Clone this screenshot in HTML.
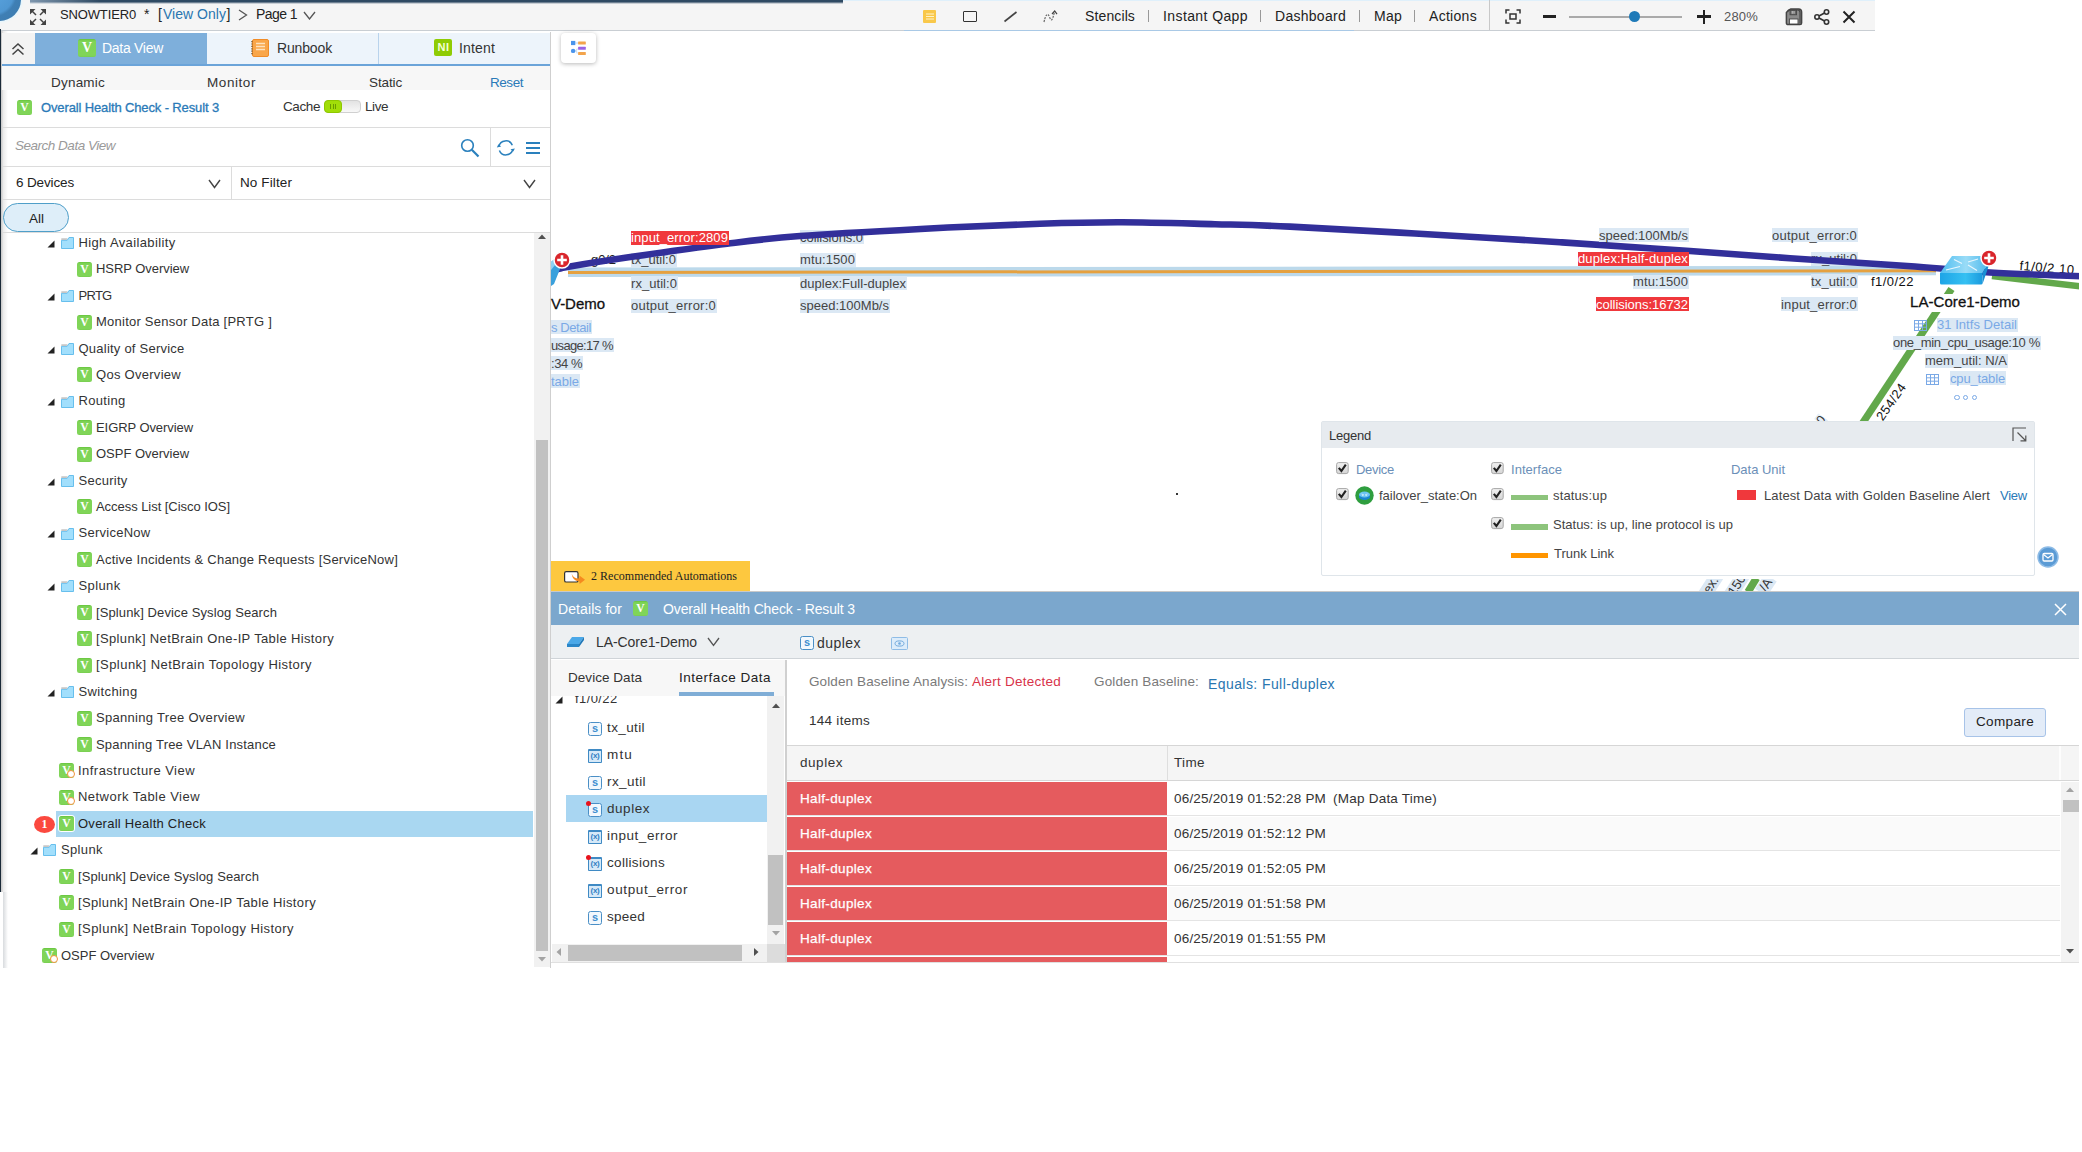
<!DOCTYPE html>
<html><head><meta charset="utf-8"><title>Map</title><style>
*{box-sizing:border-box;margin:0;padding:0}
html,body{width:2082px;height:1152px;overflow:hidden;background:#fff}
body{font-family:"Liberation Sans",sans-serif;position:relative;color:#333}
.t{position:absolute;white-space:nowrap;display:block}
.b{position:absolute;display:block}
.v{position:absolute;border-radius:2.5px;background:linear-gradient(#66c43c,#7fd457 12%,#80d558 90%,#78cd50);color:#fff;font-family:"Liberation Serif",serif;font-weight:bold;text-align:center}
</style></head><body>
<div class="b" style="left:0px;top:0px;width:1875px;height:31px;background:#f5f5f5;border-bottom:1.4px solid #c9ced3"></div>
<div class="b" style="left:30px;top:0px;width:813px;height:4.4px;background:linear-gradient(90deg,#7e96ad,#2f4a63 70px,#2f4a63);-webkit-mask-image:linear-gradient(#000,#000 45%,transparent);mask-image:linear-gradient(#000,#000 45%,transparent)"></div>
<div class="b" style="left:843px;top:0px;width:1032px;height:1px;background:#dff0fb;"></div>
<div class="b" style="left:-22px;top:-22px;width:43px;height:43px;background:radial-gradient(circle at 35% 35%,#5aa4de 0,#4f97d2 52%,#3f7fb4 60%,#3c7aae 100%);border-radius:50%;box-shadow:0 0 2px 1px #dff6ff"></div>
<svg class="b" style="left:30px;top:9px" width="16" height="16" viewBox="0 0 16 16" fill="#444" stroke="#444" stroke-width="1.5"><path d="M0 0H5.5L0 5.5Z M16 0V5.5L10.500 0Z M0 16V10.5L5.5 16Z M16 16H10.5L16 10.5Z" stroke="none"/><path d="M2 2L6 6M14 2L10 6M2 14L6 10M14 14L10 10"/></svg>
<span class="t" style="left:60.0px;top:7.9px;font-size:13px;line-height:13px;color:#222;letter-spacing:-0.142px;">SNOWTIER0</span>
<span class="t" style="left:144.0px;top:7.0px;font-size:14px;line-height:14px;color:#222;">*</span>
<span class="t" style="left:158.0px;top:7.0px;font-size:14px;line-height:14px;color:#222;">[</span>
<span class="t" style="left:163.0px;top:7.0px;font-size:14px;line-height:14px;color:#2a76b0;letter-spacing:0.026px;">View Only</span>
<span class="t" style="left:226.5px;top:7.0px;font-size:14px;line-height:14px;color:#222;">]</span>
<svg class="b" style="left:238px;top:9px" width="10" height="12" viewBox="0 0 10 12" fill="none" stroke="#555" stroke-width="1.3"><path d="M1 1L8.5 6L1 11"/></svg>
<span class="t" style="left:256.0px;top:7.0px;font-size:14px;line-height:14px;color:#222;letter-spacing:-0.562px;">Page 1</span>
<svg class="b" style="left:303px;top:11px" width="13" height="9" viewBox="0 0 13 9" fill="none" stroke="#555" stroke-width="1.3"><path d="M1 1L6.5 8L12 1"/></svg>
<div class="b" style="left:923px;top:10px;width:13px;height:13px;background:#f9c84a;border-radius:1px"></div>
<svg class="b" style="left:926px;top:13px" width="8" height="7" viewBox="0 0 8 7" stroke="#fff3c9" stroke-width="1"><path d="M0 1H8M0 3.5H8M0 6H8"/></svg>
<div class="b" style="left:963px;top:11px;width:14px;height:11px;background:transparent;border:1.5px solid #333;border-radius:1px"></div>
<svg class="b" style="left:1003px;top:10px" width="16" height="13" viewBox="0 0 16 13" stroke="#444" stroke-width="1.6"><path d="M1.5 11.5L13.5 2"/></svg>
<svg class="b" style="left:1043px;top:9px" width="16" height="15" viewBox="0 0 16 15" fill="none" stroke="#666" stroke-width="1.2"><path d="M1 13 C3 4,5 4,6.5 8 S9 13,11.5 3" stroke-dasharray="2 1"/><path d="M9 5L11.7 2L14 5.2" stroke="#444"/></svg>
<span class="t" style="left:1085.0px;top:8.6px;font-size:14px;line-height:14px;color:#222;letter-spacing:0.122px;">Stencils</span>
<div class="b" style="left:1148px;top:10px;width:1px;height:12px;background:#999;"></div>
<span class="t" style="left:1163.0px;top:8.6px;font-size:14px;line-height:14px;color:#222;letter-spacing:0.403px;">Instant Qapp</span>
<div class="b" style="left:1260px;top:10px;width:1px;height:12px;background:#999;"></div>
<span class="t" style="left:1275.0px;top:8.6px;font-size:14px;line-height:14px;color:#222;letter-spacing:0.279px;">Dashboard</span>
<div class="b" style="left:1359px;top:10px;width:1px;height:12px;background:#999;"></div>
<span class="t" style="left:1374.0px;top:8.6px;font-size:14px;line-height:14px;color:#222;letter-spacing:0.255px;">Map</span>
<div class="b" style="left:1414px;top:10px;width:1px;height:12px;background:#999;"></div>
<span class="t" style="left:1429.0px;top:8.6px;font-size:14px;line-height:14px;color:#222;letter-spacing:0.299px;">Actions</span>
<div class="b" style="left:1489px;top:0px;width:1px;height:30px;background:#c8c8c8;"></div>
<div class="b" style="left:904px;top:30px;width:450px;height:1px;background:#a9c9e6;"></div>
<svg class="b" style="left:1505px;top:9px" width="16" height="15" viewBox="0 0 16 15" fill="none" stroke="#333" stroke-width="1.5"><path d="M1 4.5V1H4.5M11.5 1H15V4.5M15 10.5V14H11.5M4.5 14H1V10.5"/><rect x="5" y="5" width="6" height="5"/></svg>
<div class="b" style="left:1543px;top:15px;width:13px;height:2.5px;background:#222;"></div>
<div class="b" style="left:1569px;top:16px;width:113px;height:1.5px;background:#aaa;"></div>
<div class="b" style="left:1629px;top:11px;width:11px;height:11px;background:#1f7ab8;border-radius:50%"></div>
<div class="b" style="left:1697px;top:15px;width:14px;height:2.5px;background:#222;"></div>
<div class="b" style="left:1702.7px;top:10px;width:2.5px;height:14px;background:#222;"></div>
<span class="t" style="left:1724.0px;top:9.5px;font-size:13px;line-height:13px;color:#555;letter-spacing:0.188px;">280%</span>
<svg class="b" style="left:1785px;top:8px" width="18" height="18" viewBox="0 0 18 18"><path d="M3.6 2.2 L5.8 0.9 H13.6 Q16.6 0.9 16.6 4 V15 Q16.6 16.6 15 16.6 H3.2 Q1.4 16.6 1.4 15 V4.6Z" fill="#8a8a8a" stroke="#444" stroke-width="1.5"/><path d="M2.6 3.4 L4.6 2 H12.6 Q15 2 15 4.4 V15.4" fill="none" stroke="#444" stroke-width="1.1"/><rect x="5" y="2.2" width="6.6" height="4.6" fill="#666" stroke="#444" stroke-width=".8"/><path d="M7.2 3V5.8M9 3V5.8" stroke="#ddd" stroke-width=".9"/><rect x="4.4" y="11" width="8.6" height="5" fill="#fff" stroke="#444" stroke-width=".9"/></svg>
<svg class="b" style="left:1814px;top:9px" width="16" height="16" viewBox="0 0 16 16" fill="none" stroke="#333" stroke-width="1.6"><circle cx="12.5" cy="3" r="2.2"/><circle cx="3" cy="8" r="2.2"/><circle cx="12.5" cy="13" r="2.2"/><path d="M5 7L10.5 4M5 9L10.5 12"/></svg>
<svg class="b" style="left:1842px;top:10px" width="14" height="14" viewBox="0 0 14 14" stroke="#222" stroke-width="2"><path d="M1.5 1.5L12.5 12.5M12.5 1.5L1.5 12.5"/></svg>
<div class="b" style="left:0px;top:29px;width:1.3px;height:863px;background:#1b2a38;"></div>
<div class="b" style="left:1.3px;top:31px;width:6.5px;height:861px;background:linear-gradient(90deg,rgba(150,150,150,.55),rgba(200,200,200,.35) 35%,rgba(255,255,255,0));"></div>
<div class="b" style="left:3px;top:892px;width:5px;height:76px;background:linear-gradient(90deg,rgba(190,195,200,.6),rgba(255,255,255,0));"></div>
<div class="b" style="left:550px;top:32px;width:1px;height:936px;background:#cfcfcf;"></div>
<div class="b" style="left:2px;top:33px;width:33px;height:31px;background:#f3f3f3;"></div>
<div class="b" style="left:35px;top:33px;width:172px;height:31px;background:#7eafdb;"></div>
<div class="b" style="left:207px;top:33px;width:343px;height:31px;background:#edf4fb;"></div>
<div class="b" style="left:378px;top:33px;width:1px;height:31px;background:#b9d3ec;"></div>
<div class="b" style="left:2px;top:64px;width:548px;height:2px;background:#6ba4d9;"></div>
<svg class="b" style="left:11px;top:42px" width="14" height="14" viewBox="0 0 14 14" fill="none" stroke="#444" stroke-width="1.5"><path d="M1.5 7L7 2L12.5 7M1.5 12.5L7 7.5L12.5 12.5"/></svg>
<div class="v" style="left:78px;top:39px;width:18px;height:18px;font-size:13.9px;line-height:18.5px;">V</div>
<span class="t" style="left:102.0px;top:41.1px;font-size:14px;line-height:14px;color:#fff;letter-spacing:-0.284px;">Data View</span>
<svg class="b" style="left:251px;top:39px" width="18" height="18" viewBox="0 0 18 18"><rect x="1.5" y="0.5" width="16" height="17" rx="1.5" fill="#f9a64a" stroke="#f08c28" stroke-width="1"/><path d="M5 4.5H14M5 7.5H14M5 10.5H14" stroke="#fde2bf" stroke-width="1.3"/><path d="M1 2V16" stroke="#7a5a33" stroke-width="1.4" stroke-dasharray="1.2 1.2"/></svg>
<span class="t" style="left:277.0px;top:41.1px;font-size:14px;line-height:14px;color:#333;letter-spacing:-0.149px;">Runbook</span>
<div class="b" style="left:434px;top:39px;width:18px;height:17px;background:#8fcc04;border-radius:2px"></div>
<span class="t" style="left:437.5px;top:42.2px;font-size:11px;line-height:11px;color:#f4ffd8;letter-spacing:0.500px;font-weight:bold;">NI</span>
<span class="t" style="left:459.0px;top:41.1px;font-size:14px;line-height:14px;color:#333;letter-spacing:0.163px;">Intent</span>
<div class="b" style="left:2px;top:66px;width:548px;height:24px;background:#f7f7f7;"></div>
<span class="t" style="left:51.0px;top:75.9px;font-size:13.5px;line-height:13.5px;color:#333;letter-spacing:0.213px;">Dynamic</span>
<span class="t" style="left:207.0px;top:75.9px;font-size:13.5px;line-height:13.5px;color:#333;letter-spacing:0.569px;">Monitor</span>
<span class="t" style="left:369.0px;top:75.9px;font-size:13.5px;line-height:13.5px;color:#333;letter-spacing:-0.127px;">Static</span>
<span class="t" style="left:490.0px;top:75.9px;font-size:13.5px;line-height:13.5px;color:#2a7ab8;letter-spacing:-0.453px;">Reset</span>
<div class="v" style="left:17px;top:100px;width:15px;height:15px;font-size:11.6px;line-height:15.5px;">V</div>
<span class="t" style="left:41.0px;top:101.0px;font-size:13px;line-height:13px;color:#2a7ab8;letter-spacing:-0.131px;-webkit-text-stroke:0.3px #2a7ab8;">Overall Health Check - Result 3</span>
<span class="t" style="left:283.0px;top:99.6px;font-size:13.5px;line-height:13.5px;color:#333;letter-spacing:-0.405px;">Cache</span>
<div class="b" style="left:324px;top:100px;width:37px;height:13px;background:linear-gradient(#e3e3e3,#f8f8f8);border-radius:4px;border:1px solid #d0d0d0"></div>
<div class="b" style="left:324px;top:100px;width:18px;height:13px;background:#a1dd08;border-radius:4px;border:1px solid #8ec800"></div>
<div class="b" style="left:330px;top:104px;width:1px;height:5px;background:#6a9c00;"></div>
<div class="b" style="left:332.5px;top:104px;width:1px;height:5px;background:#6a9c00;"></div>
<div class="b" style="left:335px;top:104px;width:1px;height:5px;background:#6a9c00;"></div>
<span class="t" style="left:365.0px;top:99.6px;font-size:13.5px;line-height:13.5px;color:#333;letter-spacing:-0.441px;">Live</span>
<div class="b" style="left:2px;top:127px;width:548px;height:1px;background:#dcdcdc;"></div>
<span class="t" style="left:15.0px;top:138.6px;font-size:13.5px;line-height:13.5px;color:#9a9a9a;letter-spacing:-0.488px;font-style:italic;">Search Data View</span>
<svg class="b" style="left:459px;top:137px" width="22" height="22" viewBox="0 0 22 22" fill="none" stroke="#2a80bd" stroke-width="1.6"><circle cx="8.5" cy="8.5" r="5.8"/><path d="M12.8 12.8L19.5 19.5" stroke-width="2.2"/></svg>
<div class="b" style="left:490px;top:128px;width:1px;height:38px;background:#dcdcdc;"></div>
<svg class="b" style="left:496px;top:138px" width="20" height="20" viewBox="0 0 20 20" fill="none" stroke="#2a80bd" stroke-width="1.5"><path d="M2.9 8.6A7 7 0 0 1 16.3 7.3"/><path d="M16.8 11.2A7 7 0 0 1 3.4 12.4"/><path d="M0.8 9.4L2.4 6.2L5.2 8.6Z" fill="#2a80bd" stroke="none"/><path d="M18.9 10.4L17.3 13.6L14.5 11.2Z" fill="#2a80bd" stroke="none"/></svg>
<div class="b" style="left:526.3px;top:142px;width:14px;height:1.7px;background:#2a80bd;"></div>
<div class="b" style="left:526.3px;top:147px;width:14px;height:1.7px;background:#2a80bd;"></div>
<div class="b" style="left:526.3px;top:152.2px;width:14px;height:1.7px;background:#2a80bd;"></div>
<div class="b" style="left:2px;top:166px;width:548px;height:1px;background:#dcdcdc;"></div>
<span class="t" style="left:16.0px;top:175.6px;font-size:13.5px;line-height:13.5px;color:#222;letter-spacing:-0.141px;">6 Devices</span>
<svg class="b" style="left:208px;top:179px" width="13" height="10" viewBox="0 0 13 10" fill="none" stroke="#444" stroke-width="1.4"><path d="M1 1L6.5 8.5L12 1"/></svg>
<div class="b" style="left:231px;top:167px;width:1px;height:32px;background:#dcdcdc;"></div>
<span class="t" style="left:240.0px;top:175.6px;font-size:13.5px;line-height:13.5px;color:#222;letter-spacing:0.110px;">No Filter</span>
<svg class="b" style="left:523px;top:179px" width="13" height="10" viewBox="0 0 13 10" fill="none" stroke="#444" stroke-width="1.4"><path d="M1 1L6.5 8.5L12 1"/></svg>
<div class="b" style="left:2px;top:199px;width:548px;height:1px;background:#dcdcdc;"></div>
<div class="b" style="left:3px;top:203px;width:66px;height:29px;background:#deeef9;border:1px solid #4f9fc9;border-radius:15px"></div>
<span class="t" style="left:29.0px;top:211.6px;font-size:13.5px;line-height:13.5px;color:#222;letter-spacing:-0.002px;">All</span>
<div class="b" style="left:2px;top:232px;width:548px;height:1px;background:#dcdcdc;"></div>
<svg class="b" style="left:47.3px;top:239.9px" width="8" height="8" viewBox="0 0 8 8"><path d="M7.5 0.5 L7.5 7.5 L0.5 7.5 Z" fill="#222"/></svg>
<svg class="b" style="left:60.6px;top:237.1px" width="13" height="12" viewBox="0 0 13 12"><path d="M0.5 3.3 H6.2 L8 0.5 H12.5 V11.5 H0.5 Z" fill="#a2dffc" stroke="#67bfed" stroke-width="1"/><path d="M0.3 1.3 H6.6 L5.6 3 H0.3Z" fill="#c6c6c6"/></svg>
<span class="t" style="left:78.5px;top:236.0px;font-size:13px;line-height:13px;color:#333;letter-spacing:0.364px;">High Availability</span>
<div class="v" style="left:77px;top:262px;width:15px;height:15px;font-size:11.6px;line-height:15.5px;">V</div>
<span class="t" style="left:96.0px;top:262.4px;font-size:13px;line-height:13px;color:#333;letter-spacing:-0.052px;">HSRP Overview</span>
<svg class="b" style="left:47.3px;top:292.7px" width="8" height="8" viewBox="0 0 8 8"><path d="M7.5 0.5 L7.5 7.5 L0.5 7.5 Z" fill="#222"/></svg>
<svg class="b" style="left:60.6px;top:289.9px" width="13" height="12" viewBox="0 0 13 12"><path d="M0.5 3.3 H6.2 L8 0.5 H12.5 V11.5 H0.5 Z" fill="#a2dffc" stroke="#67bfed" stroke-width="1"/><path d="M0.3 1.3 H6.6 L5.6 3 H0.3Z" fill="#c6c6c6"/></svg>
<span class="t" style="left:78.5px;top:288.8px;font-size:13px;line-height:13px;color:#333;letter-spacing:-0.719px;">PRTG</span>
<div class="v" style="left:77px;top:315px;width:15px;height:15px;font-size:11.6px;line-height:15.5px;">V</div>
<span class="t" style="left:96.0px;top:315.2px;font-size:13px;line-height:13px;color:#333;letter-spacing:0.239px;">Monitor Sensor Data [PRTG ]</span>
<svg class="b" style="left:47.3px;top:345.5px" width="8" height="8" viewBox="0 0 8 8"><path d="M7.5 0.5 L7.5 7.5 L0.5 7.5 Z" fill="#222"/></svg>
<svg class="b" style="left:60.6px;top:342.7px" width="13" height="12" viewBox="0 0 13 12"><path d="M0.5 3.3 H6.2 L8 0.5 H12.5 V11.5 H0.5 Z" fill="#a2dffc" stroke="#67bfed" stroke-width="1"/><path d="M0.3 1.3 H6.6 L5.6 3 H0.3Z" fill="#c6c6c6"/></svg>
<span class="t" style="left:78.5px;top:341.6px;font-size:13px;line-height:13px;color:#333;letter-spacing:0.229px;">Quality of Service</span>
<div class="v" style="left:77px;top:367px;width:15px;height:15px;font-size:11.6px;line-height:15.5px;">V</div>
<span class="t" style="left:96.0px;top:368.0px;font-size:13px;line-height:13px;color:#333;letter-spacing:0.281px;">Qos Overview</span>
<svg class="b" style="left:47.3px;top:398.29999999999995px" width="8" height="8" viewBox="0 0 8 8"><path d="M7.5 0.5 L7.5 7.5 L0.5 7.5 Z" fill="#222"/></svg>
<svg class="b" style="left:60.6px;top:395.49999999999994px" width="13" height="12" viewBox="0 0 13 12"><path d="M0.5 3.3 H6.2 L8 0.5 H12.5 V11.5 H0.5 Z" fill="#a2dffc" stroke="#67bfed" stroke-width="1"/><path d="M0.3 1.3 H6.6 L5.6 3 H0.3Z" fill="#c6c6c6"/></svg>
<span class="t" style="left:78.5px;top:394.4px;font-size:13px;line-height:13px;color:#333;letter-spacing:0.313px;">Routing</span>
<div class="v" style="left:77px;top:420px;width:15px;height:15px;font-size:11.6px;line-height:15.5px;">V</div>
<span class="t" style="left:96.0px;top:420.8px;font-size:13px;line-height:13px;color:#333;letter-spacing:-0.072px;">EIGRP Overview</span>
<div class="v" style="left:77px;top:447px;width:15px;height:15px;font-size:11.6px;line-height:15.5px;">V</div>
<span class="t" style="left:96.0px;top:447.2px;font-size:13px;line-height:13px;color:#333;letter-spacing:-0.014px;">OSPF Overview</span>
<svg class="b" style="left:47.3px;top:477.5px" width="8" height="8" viewBox="0 0 8 8"><path d="M7.5 0.5 L7.5 7.5 L0.5 7.5 Z" fill="#222"/></svg>
<svg class="b" style="left:60.6px;top:474.7px" width="13" height="12" viewBox="0 0 13 12"><path d="M0.5 3.3 H6.2 L8 0.5 H12.5 V11.5 H0.5 Z" fill="#a2dffc" stroke="#67bfed" stroke-width="1"/><path d="M0.3 1.3 H6.6 L5.6 3 H0.3Z" fill="#c6c6c6"/></svg>
<span class="t" style="left:78.5px;top:473.6px;font-size:13px;line-height:13px;color:#333;letter-spacing:0.255px;">Security</span>
<div class="v" style="left:77px;top:499px;width:15px;height:15px;font-size:11.6px;line-height:15.5px;">V</div>
<span class="t" style="left:96.0px;top:500.0px;font-size:13px;line-height:13px;color:#333;letter-spacing:-0.047px;">Access List [Cisco IOS]</span>
<svg class="b" style="left:47.3px;top:530.3px" width="8" height="8" viewBox="0 0 8 8"><path d="M7.5 0.5 L7.5 7.5 L0.5 7.5 Z" fill="#222"/></svg>
<svg class="b" style="left:60.6px;top:527.5px" width="13" height="12" viewBox="0 0 13 12"><path d="M0.5 3.3 H6.2 L8 0.5 H12.5 V11.5 H0.5 Z" fill="#a2dffc" stroke="#67bfed" stroke-width="1"/><path d="M0.3 1.3 H6.6 L5.6 3 H0.3Z" fill="#c6c6c6"/></svg>
<span class="t" style="left:78.5px;top:526.4px;font-size:13px;line-height:13px;color:#333;letter-spacing:0.265px;">ServiceNow</span>
<div class="v" style="left:77px;top:552px;width:15px;height:15px;font-size:11.6px;line-height:15.5px;">V</div>
<span class="t" style="left:96.0px;top:552.8px;font-size:13px;line-height:13px;color:#333;letter-spacing:0.230px;">Active Incidents &amp; Change Requests [ServiceNow]</span>
<svg class="b" style="left:47.3px;top:583.1px" width="8" height="8" viewBox="0 0 8 8"><path d="M7.5 0.5 L7.5 7.5 L0.5 7.5 Z" fill="#222"/></svg>
<svg class="b" style="left:60.6px;top:580.3000000000001px" width="13" height="12" viewBox="0 0 13 12"><path d="M0.5 3.3 H6.2 L8 0.5 H12.5 V11.5 H0.5 Z" fill="#a2dffc" stroke="#67bfed" stroke-width="1"/><path d="M0.3 1.3 H6.6 L5.6 3 H0.3Z" fill="#c6c6c6"/></svg>
<span class="t" style="left:78.5px;top:579.2px;font-size:13px;line-height:13px;color:#333;letter-spacing:0.376px;">Splunk</span>
<div class="v" style="left:77px;top:605px;width:15px;height:15px;font-size:11.6px;line-height:15.5px;">V</div>
<span class="t" style="left:96.0px;top:605.6px;font-size:13px;line-height:13px;color:#333;letter-spacing:0.112px;">[Splunk] Device Syslog Search</span>
<div class="v" style="left:77px;top:631px;width:15px;height:15px;font-size:11.6px;line-height:15.5px;">V</div>
<span class="t" style="left:96.0px;top:632.0px;font-size:13px;line-height:13px;color:#333;letter-spacing:0.362px;">[Splunk] NetBrain One-IP Table History</span>
<div class="v" style="left:77px;top:658px;width:15px;height:15px;font-size:11.6px;line-height:15.5px;">V</div>
<span class="t" style="left:96.0px;top:658.4px;font-size:13px;line-height:13px;color:#333;letter-spacing:0.452px;">[Splunk] NetBrain Topology History</span>
<svg class="b" style="left:47.3px;top:688.6999999999999px" width="8" height="8" viewBox="0 0 8 8"><path d="M7.5 0.5 L7.5 7.5 L0.5 7.5 Z" fill="#222"/></svg>
<svg class="b" style="left:60.6px;top:685.9px" width="13" height="12" viewBox="0 0 13 12"><path d="M0.5 3.3 H6.2 L8 0.5 H12.5 V11.5 H0.5 Z" fill="#a2dffc" stroke="#67bfed" stroke-width="1"/><path d="M0.3 1.3 H6.6 L5.6 3 H0.3Z" fill="#c6c6c6"/></svg>
<span class="t" style="left:78.5px;top:684.8px;font-size:13px;line-height:13px;color:#333;letter-spacing:0.374px;">Switching</span>
<div class="v" style="left:77px;top:711px;width:15px;height:15px;font-size:11.6px;line-height:15.5px;">V</div>
<span class="t" style="left:96.0px;top:711.2px;font-size:13px;line-height:13px;color:#333;letter-spacing:0.302px;">Spanning Tree Overview</span>
<div class="v" style="left:77px;top:737px;width:15px;height:15px;font-size:11.6px;line-height:15.5px;">V</div>
<span class="t" style="left:96.0px;top:737.6px;font-size:13px;line-height:13px;color:#333;letter-spacing:0.189px;">Spanning Tree VLAN Instance</span>
<div class="v" style="left:59px;top:763px;width:15px;height:15px;font-size:11.6px;line-height:15.5px;">V</div>
<div class="b" style="left:66.6px;top:770.4px;width:8px;height:8px;border-radius:50%;background:#fff;border:1.4px solid #f0933c"></div>
<span class="t" style="left:78.0px;top:764.0px;font-size:13px;line-height:13px;color:#333;letter-spacing:0.466px;">Infrastructure View</span>
<div class="v" style="left:59px;top:790px;width:15px;height:15px;font-size:11.6px;line-height:15.5px;">V</div>
<div class="b" style="left:66.6px;top:797.4px;width:8px;height:8px;border-radius:50%;background:#fff;border:1.4px solid #f0933c"></div>
<span class="t" style="left:78.0px;top:790.4px;font-size:13px;line-height:13px;color:#333;letter-spacing:0.462px;">Network Table View</span>
<div class="b" style="left:56px;top:811px;width:477px;height:26px;background:#a9d7f1;"></div>
<div class="b" style="left:34px;top:815.5px;width:21px;height:17px;border-radius:50%;background:#fb493f;color:#fff;font:bold 12px/17px 'Liberation Serif',serif;text-align:center">1</div>
<div class="v" style="left:59px;top:816px;width:15px;height:15px;font-size:11.6px;line-height:15.5px;box-shadow:0 0 0 1px #fff;">V</div>
<span class="t" style="left:78.0px;top:816.8px;font-size:13px;line-height:13px;color:#222;letter-spacing:0.259px;">Overall Health Check</span>
<svg class="b" style="left:29.699999999999996px;top:847.0999999999999px" width="8" height="8" viewBox="0 0 8 8"><path d="M7.5 0.5 L7.5 7.5 L0.5 7.5 Z" fill="#222"/></svg>
<svg class="b" style="left:43.0px;top:844.3px" width="13" height="12" viewBox="0 0 13 12"><path d="M0.5 3.3 H6.2 L8 0.5 H12.5 V11.5 H0.5 Z" fill="#a2dffc" stroke="#67bfed" stroke-width="1"/><path d="M0.3 1.3 H6.6 L5.6 3 H0.3Z" fill="#c6c6c6"/></svg>
<span class="t" style="left:60.9px;top:843.2px;font-size:13px;line-height:13px;color:#333;letter-spacing:0.376px;">Splunk</span>
<div class="v" style="left:59px;top:869px;width:15px;height:15px;font-size:11.6px;line-height:15.5px;">V</div>
<span class="t" style="left:78.0px;top:869.6px;font-size:13px;line-height:13px;color:#333;letter-spacing:0.112px;">[Splunk] Device Syslog Search</span>
<div class="v" style="left:59px;top:895px;width:15px;height:15px;font-size:11.6px;line-height:15.5px;">V</div>
<span class="t" style="left:78.0px;top:896.0px;font-size:13px;line-height:13px;color:#333;letter-spacing:0.362px;">[Splunk] NetBrain One-IP Table History</span>
<div class="v" style="left:59px;top:922px;width:15px;height:15px;font-size:11.6px;line-height:15.5px;">V</div>
<span class="t" style="left:78.0px;top:922.4px;font-size:13px;line-height:13px;color:#333;letter-spacing:0.452px;">[Splunk] NetBrain Topology History</span>
<div class="v" style="left:42px;top:948px;width:15px;height:15px;font-size:11.6px;line-height:15.5px;">V</div>
<div class="b" style="left:49.6px;top:955.4px;width:8px;height:8px;border-radius:50%;background:#fff;border:1.4px solid #f0933c"></div>
<span class="t" style="left:61.0px;top:948.8px;font-size:13px;line-height:13px;color:#333;letter-spacing:-0.014px;">OSPF Overview</span>
<div class="b" style="left:534px;top:233px;width:16px;height:734px;background:#f1f1f1;"></div>
<div class="b" style="left:536px;top:440px;width:12px;height:511px;background:#c1c1c1;"></div>
<svg class="b" style="left:538px;top:234px" width="8" height="5" viewBox="0 0 8 5"><path d="M0 5L4 0.5L8 5Z" fill="#505050"/></svg>
<svg class="b" style="left:538px;top:957px" width="8" height="5" viewBox="0 0 8 5"><path d="M0 0L4 4.5L8 0Z" fill="#a3a3a3"/></svg>
<div class="b" style="left:561px;top:33px;width:35px;height:30px;background:#fff;border-radius:4px;box-shadow:0 1px 4px rgba(0,0,0,.28)"></div>
<svg class="b" style="left:568px;top:38px" width="22" height="20" viewBox="568 38 22 20"><path d="M575.3 43H578M575.2 50.9 Q577 50.9 577.2 48.6 M575.2 50.9 Q577 50.9 577.2 53.5" stroke="#bcd6f0" stroke-width="1" fill="none"/><rect x="571" y="40.9" width="4.3" height="4.2" fill="#4a94ec"/><rect x="578.1" y="41.4" width="7.7" height="3" rx=".5" fill="#f3a44c"/><rect x="578.1" y="46.8" width="7.7" height="3" rx=".5" fill="#9a63e6"/><circle cx="573.1" cy="50.9" r="2.2" fill="#4a94ec"/><rect x="578.1" y="52.1" width="7.7" height="3" rx=".5" fill="#f3a44c"/></svg>
<svg class="b" style="left:551px;top:200px" width="1531" height="392" viewBox="551 200 1531 392">
<path d="M1951.5 289 L1856 433" stroke="#62a84b" stroke-width="7.2" fill="none"/>
<path d="M1992 276 L2082 286.5" stroke="#62a84b" stroke-width="6.5" fill="none"/>
</svg>
<div class="b" style="left:799.5px;top:230px;width:64px;height:14px;background:#dbe8f4;"></div>
<span class="t" style="left:800.0px;top:230.6px;font-size:13px;line-height:13px;color:#444;letter-spacing:-0.048px;">collisions:0</span>
<div class="b" style="left:630.5px;top:252.5px;width:46px;height:14px;background:#dbe8f4;"></div>
<span class="t" style="left:631.0px;top:253.1px;font-size:13px;line-height:13px;color:#444;letter-spacing:0.022px;">tx_util:0</span>
<span class="t" style="left:591.0px;top:253.0px;font-size:13px;line-height:13px;color:#222;letter-spacing:-0.075px;">g0/2</span>
<div class="b" style="left:1810.5px;top:251.5px;width:47px;height:14px;background:#dbe8f4;"></div>
<span class="t" style="left:1811.0px;top:252.1px;font-size:13px;line-height:13px;color:#444;letter-spacing:0.053px;">rx_util:0</span>
<span class="t" style="left:2019px;top:258.5px;font-size:13px;line-height:13px;color:#111;letter-spacing:.5px;transform:rotate(4.5deg);transform-origin:0 100%">f1/0/2 10.1</span>
<svg class="b" style="left:551px;top:200px" width="1531" height="392" viewBox="551 200 1531 392">
<path d="M568 272.2 L1936 270.6" stroke="#bcd9eb" stroke-width="9.5" fill="none"/>
<path d="M568 272.4 L1936 270.8" stroke="#e5a140" stroke-width="3" fill="none"/>
<path d="M557 269.5 C559.2 269.0,557.5 268.5,570 266.4 C582.5 264.3,605.8 260.6,632 256.8 C658.2 253.0,699.0 247.2,727 243.7 C755.0 240.2,767.0 238.5,800 236 C833.0 233.5,885.0 230.8,925 228.7 C965.0 226.6,1007.2 224.8,1040 223.7 C1072.8 222.6,1092.8 222.1,1122 222.2 C1151.2 222.3,1187.0 223.5,1215 224.2 C1243.0 224.9,1256.7 225.0,1290 226.6 C1323.3 228.2,1370.0 230.9,1415 233.5 C1460.0 236.1,1514.2 239.3,1560 242.2 C1605.8 245.1,1651.7 248.3,1690 251 C1728.3 253.7,1752.5 255.6,1790 258.2 C1827.5 260.8,1881.7 264.1,1915 266.5 C1948.3 268.9,1965.8 271.0,1990 272.5 C2014.2 274.0,2044.7 274.9,2060 275.5 C2075.3 276.1,2078.3 276.2,2082 276.3" stroke="#322f9a" stroke-width="6.6" fill="none"/>
</svg>
<div class="b" style="left:630.5px;top:230.5px;width:98px;height:14px;background:#f0383c;"></div>
<span class="t" style="left:631.0px;top:231.1px;font-size:13px;line-height:13px;color:#fff;letter-spacing:0.100px;">input_error:2809</span>
<div class="b" style="left:630.5px;top:276px;width:47px;height:14px;background:#dbe8f4;"></div>
<span class="t" style="left:631.0px;top:276.6px;font-size:13px;line-height:13px;color:#444;letter-spacing:0.053px;">rx_util:0</span>
<div class="b" style="left:630.5px;top:298.5px;width:86px;height:14px;background:#dbe8f4;"></div>
<span class="t" style="left:631.0px;top:299.1px;font-size:13px;line-height:13px;color:#444;letter-spacing:0.238px;">output_error:0</span>
<div class="b" style="left:799.5px;top:252.5px;width:56px;height:14px;background:#dbe8f4;"></div>
<span class="t" style="left:800.0px;top:253.1px;font-size:13px;line-height:13px;color:#444;letter-spacing:0.100px;">mtu:1500</span>
<div class="b" style="left:799.5px;top:276px;width:107px;height:14px;background:#dbe8f4;"></div>
<span class="t" style="left:800.0px;top:276.6px;font-size:13px;line-height:13px;color:#444;letter-spacing:0.028px;">duplex:Full-duplex</span>
<div class="b" style="left:799.5px;top:298.5px;width:90px;height:14px;background:#dbe8f4;"></div>
<span class="t" style="left:800.0px;top:299.1px;font-size:13px;line-height:13px;color:#444;letter-spacing:0.008px;">speed:100Mb/s</span>
<div class="b" style="left:1598.5px;top:228.3px;width:90px;height:14px;background:#dbe8f4;"></div>
<span class="t" style="left:1599.0px;top:228.9px;font-size:13px;line-height:13px;color:#444;letter-spacing:0.008px;">speed:100Mb/s</span>
<div class="b" style="left:1771.5px;top:228.3px;width:86px;height:14px;background:#dbe8f4;"></div>
<span class="t" style="left:1772.0px;top:228.9px;font-size:13px;line-height:13px;color:#444;letter-spacing:0.238px;">output_error:0</span>
<div class="b" style="left:1577.5px;top:251.5px;width:111px;height:14px;background:#f0383c;"></div>
<span class="t" style="left:1578.0px;top:252.1px;font-size:13px;line-height:13px;color:#fff;letter-spacing:0.129px;">duplex:Half-duplex</span>
<div class="b" style="left:1632.5px;top:274.7px;width:56px;height:14px;background:#dbe8f4;"></div>
<span class="t" style="left:1633.0px;top:275.3px;font-size:13px;line-height:13px;color:#444;letter-spacing:0.100px;">mtu:1500</span>
<div class="b" style="left:1810.5px;top:274.3px;width:47px;height:14px;background:#dbe8f4;"></div>
<span class="t" style="left:1811.0px;top:274.9px;font-size:13px;line-height:13px;color:#444;letter-spacing:0.133px;">tx_util:0</span>
<span class="t" style="left:1871.0px;top:274.7px;font-size:13px;line-height:13px;color:#111;letter-spacing:0.463px;">f1/0/22</span>
<div class="b" style="left:1595.5px;top:297.2px;width:93px;height:14px;background:#f0383c;"></div>
<span class="t" style="left:1596.0px;top:297.8px;font-size:13px;line-height:13px;color:#fff;letter-spacing:-0.031px;">collisions:16732</span>
<div class="b" style="left:1780.5px;top:297.2px;width:77px;height:14px;background:#dbe8f4;"></div>
<span class="t" style="left:1781.0px;top:297.8px;font-size:13px;line-height:13px;color:#444;letter-spacing:0.176px;">input_error:0</span>
<svg class="b" style="left:551px;top:250px" width="14" height="40" viewBox="0 0 14 40"><path d="M0 12 L7 6 L11 14 L3 34 L0 36Z" fill="#3aa0dc"/><path d="M0 12 L7 6 L9 9 L0 20Z" fill="#8fd0f2"/></svg>
<svg class="b" style="left:553px;top:251px" width="18" height="18" viewBox="0 0 18 18"><circle cx="9" cy="9" r="8" fill="#d9262c" stroke="#fff" stroke-width="1.5"/><path d="M9 4.2V13.8M4.2 9H13.8" stroke="#fff" stroke-width="2.6"/></svg>
<span class="t" style="left:551.0px;top:296.3px;font-size:15px;line-height:15px;color:#111;letter-spacing:-0.031px;-webkit-text-stroke:0.3px #111;">V-Demo</span>
<div class="b" style="left:550.5px;top:320px;width:41px;height:14px;background:#dbe8f4;"></div>
<span class="t" style="left:551.0px;top:320.6px;font-size:13px;line-height:13px;color:#7aa9e6;letter-spacing:-0.418px;">s Detail</span>
<div class="b" style="left:550.5px;top:338px;width:63px;height:14px;background:#dbe8f4;"></div>
<span class="t" style="left:551.0px;top:338.6px;font-size:13px;line-height:13px;color:#444;letter-spacing:-0.666px;">usage:17 %</span>
<div class="b" style="left:550.5px;top:356px;width:32px;height:14px;background:#dbe8f4;"></div>
<span class="t" style="left:551.0px;top:356.6px;font-size:13px;line-height:13px;color:#444;letter-spacing:-0.449px;">:34 %</span>
<div class="b" style="left:550.5px;top:374px;width:29px;height:14px;background:#dbe8f4;"></div>
<span class="t" style="left:551.0px;top:374.6px;font-size:13px;line-height:13px;color:#7aa9e6;letter-spacing:-0.038px;">table</span>
<div class="b" style="left:1908px;top:294px;width:114px;height:18px;background:#fff;"></div>
<svg class="b" style="left:1938px;top:252px" width="58" height="36" viewBox="1938 252 58 36"><defs><linearGradient id="sw" x1="0" y1="0" x2="1" y2="0"><stop offset="0" stop-color="#4fbdf0"/><stop offset=".5" stop-color="#9adcf7"/><stop offset="1" stop-color="#3fb2ea"/></linearGradient><linearGradient id="sf" x1="0" y1="0" x2="1" y2="0"><stop offset="0" stop-color="#1ea4e6"/><stop offset=".6" stop-color="#35c0f2"/><stop offset="1" stop-color="#1b9ade"/></linearGradient></defs><path d="M1940 273 L1952 256 L1992 256 L1982.5 273 Z" fill="url(#sw)"/><path d="M1940 273 H1982.5 V283 Q1982.5 284.5 1981 284.5 H1941.5 Q1940 284.5 1940 283Z" fill="url(#sf)"/><path d="M1982.5 273 L1992 256 L1988 268 L1982.5 284 Z" fill="#1a8fd4"/><path d="M1946 270L1960 266.5M1968 262L1978 259M1954 259.5L1962 263.5M1968 265L1977 270.5" stroke="#e9f7fe" stroke-width="1.1" fill="none"/></svg>
<svg class="b" style="left:1980px;top:249px" width="18" height="18" viewBox="0 0 18 18"><circle cx="9" cy="9" r="8" fill="#d9262c" stroke="#fff" stroke-width="1.5"/><path d="M9 4.2V13.8M4.2 9H13.8" stroke="#fff" stroke-width="2.6"/></svg>
<span class="t" style="left:1910.0px;top:294.1px;font-size:15px;line-height:15px;color:#111;letter-spacing:0.061px;-webkit-text-stroke:0.3px #111;">LA-Core1-Demo</span>
<svg class="b" style="left:1914px;top:320px" width="13" height="11" viewBox="0 0 13 11" fill="none" stroke="#7aa9e6" stroke-width="1"><rect x="0.5" y="0.5" width="12" height="10"/><path d="M0.5 3.8H12.5M0.5 7.2H12.5M4.5 0.5V10.5M8.5 0.5V10.5"/></svg>
<div class="b" style="left:1936.5px;top:317.5px;width:81px;height:14px;background:#dbe8f4;"></div>
<span class="t" style="left:1937.0px;top:318.1px;font-size:13px;line-height:13px;color:#7aa9e6;letter-spacing:0.034px;">31 Intfs Detail</span>
<div class="b" style="left:1892.5px;top:335.5px;width:148px;height:14px;background:#dbe8f4;"></div>
<span class="t" style="left:1893.0px;top:336.1px;font-size:13px;line-height:13px;color:#444;letter-spacing:-0.316px;">one_min_cpu_usage:10 %</span>
<div class="b" style="left:1924.5px;top:353.5px;width:83px;height:14px;background:#dbe8f4;"></div>
<span class="t" style="left:1925.0px;top:354.1px;font-size:13px;line-height:13px;color:#444;letter-spacing:0.028px;">mem_util: N/A</span>
<svg class="b" style="left:1926px;top:374px" width="13" height="11" viewBox="0 0 13 11" fill="none" stroke="#7aa9e6" stroke-width="1"><rect x="0.5" y="0.5" width="12" height="10"/><path d="M0.5 3.8H12.5M0.5 7.2H12.5M4.5 0.5V10.5M8.5 0.5V10.5"/></svg>
<div class="b" style="left:1949.5px;top:371.4px;width:56px;height:14px;background:#dbe8f4;"></div>
<span class="t" style="left:1950.0px;top:372.0px;font-size:13px;line-height:13px;color:#7aa9e6;letter-spacing:-0.153px;">cpu_table</span>
<div class="b" style="left:1954.3px;top:395px;width:5.4px;height:5.4px;background:#fff;border:1.4px solid #7aa9e6;border-radius:50%"></div>
<div class="b" style="left:1962.8px;top:395px;width:5.4px;height:5.4px;background:#fff;border:1.4px solid #7aa9e6;border-radius:50%"></div>
<div class="b" style="left:1971.8px;top:395px;width:5.4px;height:5.4px;background:#fff;border:1.4px solid #7aa9e6;border-radius:50%"></div>
<span class="t" style="left:1881.5px;top:412.5px;font-size:13px;line-height:13px;color:#111;letter-spacing:.4px;transform:rotate(-55deg);transform-origin:0 100%">.254/24</span>
<div class="b" style="left:1680px;top:579px;width:120px;height:12px;overflow:hidden">
<span class="t" style="left:31px;top:6px;font-size:13px;line-height:14px;color:#333;background:#dbe8f4;padding:0 3px;transform:translate(-50%,-50%) rotate(-57deg)">ex:</span>
<span class="t" style="left:57px;top:6px;font-size:13px;line-height:14px;color:#333;background:#dbe8f4;padding:0 3px;transform:translate(-50%,-50%) rotate(-57deg)">150</span>
<span class="t" style="left:86px;top:6px;font-size:13px;line-height:14px;color:#333;background:#dbe8f4;padding:0 3px;transform:translate(-50%,-50%) rotate(-57deg)">/A</span>
<svg class="b" style="left:0;top:0" width="120" height="12"><path d="M76.5 -1 L68 13" stroke="#62a84b" stroke-width="7.5"/></svg>
</div>
<div class="b" style="left:1176.3px;top:493.3px;width:1.7px;height:1.7px;background:#111;border-radius:40%"></div>
<span class="t" style="left:1824px;top:414px;font-size:12px;line-height:12px;color:#333;background:#e4eef8;transform:rotate(-55deg);transform-origin:0 100%">0</span>
<div class="b" style="left:1321px;top:421px;width:714px;height:155px;background:#fff;border:1px solid #dfe5ea;border-radius:2px"></div>
<div class="b" style="left:1322px;top:422px;width:712px;height:26px;background:#e7ebef;"></div>
<span class="t" style="left:1329.0px;top:429.0px;font-size:13px;line-height:13px;color:#333;letter-spacing:-0.230px;">Legend</span>
<svg class="b" style="left:2012px;top:427px" width="16" height="16" viewBox="0 0 16 16" fill="none" stroke="#555" stroke-width="1.2"><path d="M1 14V1H14"/><path d="M5.5 5.5L13.5 13.5M8.5 13.8H13.8V8.5" /></svg>
<svg class="b" style="left:1336px;top:462px" width="13" height="13" viewBox="0 0 13 13"><defs><linearGradient id="cg" x1="0" y1="0" x2="0" y2="1"><stop offset="0" stop-color="#f2f2f2"/><stop offset="1" stop-color="#d4d4d4"/></linearGradient></defs><rect x="0.6" y="0.6" width="11.6" height="11" rx="2" fill="url(#cg)" stroke="#a6a6a6"/><path d="M2.8 5.8L5.4 9L9.8 2.6" fill="none" stroke="#222" stroke-width="2.1"/></svg>
<span class="t" style="left:1356.0px;top:462.5px;font-size:13px;line-height:13px;color:#6b8fb8;letter-spacing:-0.289px;">Device</span>
<svg class="b" style="left:1491px;top:462px" width="13" height="13" viewBox="0 0 13 13"><defs><linearGradient id="cg" x1="0" y1="0" x2="0" y2="1"><stop offset="0" stop-color="#f2f2f2"/><stop offset="1" stop-color="#d4d4d4"/></linearGradient></defs><rect x="0.6" y="0.6" width="11.6" height="11" rx="2" fill="url(#cg)" stroke="#a6a6a6"/><path d="M2.8 5.8L5.4 9L9.8 2.6" fill="none" stroke="#222" stroke-width="2.1"/></svg>
<span class="t" style="left:1511.0px;top:462.5px;font-size:13px;line-height:13px;color:#6b8fb8;letter-spacing:0.046px;">Interface</span>
<span class="t" style="left:1731.0px;top:462.5px;font-size:13px;line-height:13px;color:#6b8fb8;letter-spacing:-0.021px;">Data Unit</span>
<svg class="b" style="left:1336px;top:488px" width="13" height="13" viewBox="0 0 13 13"><defs><linearGradient id="cg" x1="0" y1="0" x2="0" y2="1"><stop offset="0" stop-color="#f2f2f2"/><stop offset="1" stop-color="#d4d4d4"/></linearGradient></defs><rect x="0.6" y="0.6" width="11.6" height="11" rx="2" fill="url(#cg)" stroke="#a6a6a6"/><path d="M2.8 5.8L5.4 9L9.8 2.6" fill="none" stroke="#222" stroke-width="2.1"/></svg>
<svg class="b" style="left:1355px;top:486px" width="19" height="19" viewBox="0 0 19 19"><circle cx="9.5" cy="9.5" r="9.2" fill="#2f9e3f"/><path d="M4 8.5V11a5.5 3 0 0 0 11 0V8.5Z" fill="#1a86d0"/><ellipse cx="9.5" cy="8.5" rx="5.5" ry="3" fill="#6cc4f2"/><path d="M6.5 8l2.2.8M12.5 8l-2.2.8M7 9.6l1.8-.6M12 9.6l-1.8-.6" stroke="#e8f6ff" stroke-width=".7"/></svg>
<span class="t" style="left:1379.0px;top:488.5px;font-size:13px;line-height:13px;color:#444;letter-spacing:-0.016px;">failover_state:On</span>
<svg class="b" style="left:1491px;top:488px" width="13" height="13" viewBox="0 0 13 13"><defs><linearGradient id="cg" x1="0" y1="0" x2="0" y2="1"><stop offset="0" stop-color="#f2f2f2"/><stop offset="1" stop-color="#d4d4d4"/></linearGradient></defs><rect x="0.6" y="0.6" width="11.6" height="11" rx="2" fill="url(#cg)" stroke="#a6a6a6"/><path d="M2.8 5.8L5.4 9L9.8 2.6" fill="none" stroke="#222" stroke-width="2.1"/></svg>
<div class="b" style="left:1510.5px;top:494.6px;width:37.5px;height:5.8px;background:#8dc47c;"></div>
<span class="t" style="left:1553.0px;top:488.5px;font-size:13px;line-height:13px;color:#444;letter-spacing:0.138px;">status:up</span>
<div class="b" style="left:1737px;top:490px;width:19px;height:10px;background:#f0383c;"></div>
<span class="t" style="left:1764.0px;top:488.5px;font-size:13px;line-height:13px;color:#444;letter-spacing:0.109px;">Latest Data with Golden Baseline Alert</span>
<span class="t" style="left:2000.0px;top:488.5px;font-size:13px;line-height:13px;color:#2a7ab8;letter-spacing:-0.235px;">View</span>
<svg class="b" style="left:1491px;top:517px" width="13" height="13" viewBox="0 0 13 13"><defs><linearGradient id="cg" x1="0" y1="0" x2="0" y2="1"><stop offset="0" stop-color="#f2f2f2"/><stop offset="1" stop-color="#d4d4d4"/></linearGradient></defs><rect x="0.6" y="0.6" width="11.6" height="11" rx="2" fill="url(#cg)" stroke="#a6a6a6"/><path d="M2.8 5.8L5.4 9L9.8 2.6" fill="none" stroke="#222" stroke-width="2.1"/></svg>
<div class="b" style="left:1510.5px;top:523.9px;width:37.5px;height:5.8px;background:#8dc47c;"></div>
<span class="t" style="left:1553.0px;top:517.5px;font-size:13px;line-height:13px;color:#444;letter-spacing:0.002px;">Status: is up, line protocol is up</span>
<div class="b" style="left:1511px;top:553px;width:37px;height:4.6px;background:#ff9500;"></div>
<span class="t" style="left:1554.0px;top:546.5px;font-size:13px;line-height:13px;color:#444;letter-spacing:-0.021px;">Trunk Link</span>
<svg class="b" style="left:2037px;top:546px" width="22" height="22" viewBox="0 0 22 22"><circle cx="11" cy="11" r="10" fill="#5b9bd5" stroke="#8dbbe6" stroke-width="1.5"/><rect x="6" y="7.5" width="10" height="7.5" rx="1.2" fill="none" stroke="#fff" stroke-width="1.3"/><path d="M6.5 8.5L11 12L15.5 8.5" fill="none" stroke="#fff" stroke-width="1.2"/></svg>
<div class="b" style="left:551px;top:561px;width:199px;height:30px;background:#fdc83f;"></div>
<svg class="b" style="left:562px;top:568px" width="26" height="18" viewBox="562 568 26 18"><rect x="564.6" y="571.6" width="13.4" height="10.4" rx="1.6" fill="#fff" stroke="#333" stroke-width="1.2"/><path d="M571.6 573.4 Q573.5 578.8 579.4 578.4 L579.4 575.4 L585 579.8 L579.6 584 L579.4 581.2 Q572.8 581.6 571.6 573.4Z" fill="#f58a1f"/></svg>
<span class="t" style="left:591.0px;top:569.8px;font-size:12px;line-height:12px;color:#222;letter-spacing:0.027px;font-family:'Liberation Serif',serif;">2 Recommended Automations</span>
<div class="b" style="left:551px;top:591px;width:1528px;height:34px;background:#7ba7cd;border-top:1px solid #c9c9c9"></div>
<span class="t" style="left:558.0px;top:601.6px;font-size:14px;line-height:14px;color:#fff;letter-spacing:0.089px;">Details for</span>
<div class="v" style="left:633px;top:601px;width:15px;height:15px;font-size:11.6px;line-height:15.5px;">V</div>
<span class="t" style="left:663.0px;top:601.6px;font-size:14px;line-height:14px;color:#fff;letter-spacing:-0.131px;">Overall Health Check - Result 3</span>
<svg class="b" style="left:2054px;top:603px" width="13" height="13" viewBox="0 0 13 13" stroke="#fff" stroke-width="1.5"><path d="M1 1L12 12M12 1L1 12"/></svg>
<div class="b" style="left:551px;top:625px;width:1528px;height:34px;background:#edf0f2;border-bottom:1px solid #cfd4d8"></div>
<svg class="b" style="left:566px;top:636px" width="19" height="12" viewBox="0 0 19 12"><path d="M1 8L6 1H18L13 8Z" fill="#4aa8e8"/><path d="M1 8H13V11H1Z" fill="#2a86c8"/><path d="M13 8L18 1V4L13 11Z" fill="#1f78b8"/></svg>
<span class="t" style="left:596.0px;top:634.6px;font-size:14px;line-height:14px;color:#333;letter-spacing:-0.071px;">LA-Core1-Demo</span>
<svg class="b" style="left:707px;top:637px" width="13" height="10" viewBox="0 0 13 10" fill="none" stroke="#555" stroke-width="1.3"><path d="M1 1L6.5 8.5L12 1"/></svg>
<div class="b" style="left:800px;top:636px;width:14px;height:14px;border:1.4px solid #4a8fc6;border-radius:2.5px;background:#f2f8fd;color:#3f8fd0;font:bold 11px/10.6px 'Liberation Sans',sans-serif;text-align:center">s</div>
<span class="t" style="left:817.0px;top:636.4px;font-size:14px;line-height:14px;color:#333;letter-spacing:0.458px;">duplex</span>
<svg class="b" style="left:891px;top:637px" width="17" height="13" viewBox="0 0 17 13"><rect x="0.5" y="0.5" width="16" height="12" rx="1" fill="#dcecfa" stroke="#8fbce6"/><ellipse cx="8.5" cy="6.5" rx="4.5" ry="2.6" fill="none" stroke="#6fa8dc" stroke-width="1"/><circle cx="8.5" cy="6.5" r="1.3" fill="#6fa8dc"/></svg>
<div class="b" style="left:551px;top:660px;width:234px;height:36px;background:#f7f7f7;"></div>
<div class="b" style="left:785px;top:660px;width:1.7px;height:302px;background:#d0d0d0;"></div>
<span class="t" style="left:568.0px;top:670.6px;font-size:13.5px;line-height:13.5px;color:#333;letter-spacing:0.043px;">Device Data</span>
<span class="t" style="left:679.0px;top:670.6px;font-size:13.5px;line-height:13.5px;color:#222;letter-spacing:0.515px;">Interface Data</span>
<div class="b" style="left:679px;top:692px;width:95px;height:4px;background:#7fadd6;"></div>
<div class="b" style="left:552px;top:696px;width:214px;height:12px;overflow:hidden">
<svg class="b" style="left:3px;top:0px" width="8" height="8" viewBox="0 0 8 8"><path d="M7.5 0.5 L7.5 7.5 L0.5 7.5 Z" fill="#222"/></svg>
<span class="t" style="left:23px;top:-4.5px;font-size:13px;line-height:13px;color:#333;letter-spacing:0.4px">f1/0/22</span>
</div>
<div class="b" style="left:588px;top:721.5px;width:14px;height:14px;border:1.4px solid #4a8fc6;border-radius:2.5px;background:#f2f8fd;color:#3f8fd0;font:bold 11px/10.6px 'Liberation Sans',sans-serif;text-align:center">s</div>
<span class="t" style="left:607.0px;top:721.1px;font-size:13.5px;line-height:13.5px;color:#333;letter-spacing:0.391px;">tx_util</span>
<div class="b" style="left:588px;top:748.5px;width:14px;height:14px;border:1.4px solid #3f8ac4;border-top-width:2.6px;border-radius:1px;background:#d6e9f8;color:#2f80c4;font:bold 8px/10.4px 'Liberation Sans',sans-serif;text-align:center;letter-spacing:-.3px">(x)</div>
<span class="t" style="left:607.0px;top:748.1px;font-size:13.5px;line-height:13.5px;color:#333;letter-spacing:1.166px;">mtu</span>
<div class="b" style="left:588px;top:775.5px;width:14px;height:14px;border:1.4px solid #4a8fc6;border-radius:2.5px;background:#f2f8fd;color:#3f8fd0;font:bold 11px/10.6px 'Liberation Sans',sans-serif;text-align:center">s</div>
<span class="t" style="left:607.0px;top:775.1px;font-size:13.5px;line-height:13.5px;color:#333;letter-spacing:0.427px;">rx_util</span>
<div class="b" style="left:566px;top:795px;width:201px;height:27px;background:#a9d6f2;"></div>
<div class="b" style="left:588px;top:802.5px;width:14px;height:14px;border:1.4px solid #4a8fc6;border-radius:2.5px;background:#f2f8fd;color:#3f8fd0;font:bold 11px/10.6px 'Liberation Sans',sans-serif;text-align:center">s</div>
<div class="b" style="left:586px;top:800.5px;width:5px;height:5px;background:#e8121c;border-radius:50%"></div>
<span class="t" style="left:607.0px;top:802.1px;font-size:13.5px;line-height:13.5px;color:#333;letter-spacing:0.536px;">duplex</span>
<div class="b" style="left:588px;top:829.5px;width:14px;height:14px;border:1.4px solid #3f8ac4;border-top-width:2.6px;border-radius:1px;background:#d6e9f8;color:#2f80c4;font:bold 8px/10.4px 'Liberation Sans',sans-serif;text-align:center;letter-spacing:-.3px">(x)</div>
<span class="t" style="left:607.0px;top:829.1px;font-size:13.5px;line-height:13.5px;color:#333;letter-spacing:0.520px;">input_error</span>
<div class="b" style="left:588px;top:856.5px;width:14px;height:14px;border:1.4px solid #3f8ac4;border-top-width:2.6px;border-radius:1px;background:#d6e9f8;color:#2f80c4;font:bold 8px/10.4px 'Liberation Sans',sans-serif;text-align:center;letter-spacing:-.3px">(x)</div>
<div class="b" style="left:586px;top:854.5px;width:5px;height:5px;background:#e8121c;border-radius:50%"></div>
<span class="t" style="left:607.0px;top:856.1px;font-size:13.5px;line-height:13.5px;color:#333;letter-spacing:0.323px;">collisions</span>
<div class="b" style="left:588px;top:883.5px;width:14px;height:14px;border:1.4px solid #3f8ac4;border-top-width:2.6px;border-radius:1px;background:#d6e9f8;color:#2f80c4;font:bold 8px/10.4px 'Liberation Sans',sans-serif;text-align:center;letter-spacing:-.3px">(x)</div>
<span class="t" style="left:607.0px;top:883.1px;font-size:13.5px;line-height:13.5px;color:#333;letter-spacing:0.622px;">output_error</span>
<div class="b" style="left:588px;top:910.5px;width:14px;height:14px;border:1.4px solid #4a8fc6;border-radius:2.5px;background:#f2f8fd;color:#3f8fd0;font:bold 11px/10.6px 'Liberation Sans',sans-serif;text-align:center">s</div>
<span class="t" style="left:607.0px;top:910.1px;font-size:13.5px;line-height:13.5px;color:#333;letter-spacing:0.244px;">speed</span>
<div class="b" style="left:767px;top:696px;width:17px;height:248px;background:#f1f1f1;"></div>
<div class="b" style="left:768px;top:855px;width:15px;height:70px;background:#c1c1c1;"></div>
<svg class="b" style="left:772px;top:703px" width="8" height="5" viewBox="0 0 8 5"><path d="M0 5L4 0.5L8 5Z" fill="#505050"/></svg>
<svg class="b" style="left:772px;top:931px" width="8" height="5" viewBox="0 0 8 5"><path d="M0 0L4 4.5L8 0Z" fill="#a3a3a3"/></svg>
<div class="b" style="left:552px;top:944px;width:232px;height:18px;background:#f1f1f1;"></div>
<div class="b" style="left:568px;top:945px;width:174px;height:16px;background:#c1c1c1;"></div>
<div class="b" style="left:767px;top:944px;width:18px;height:18px;background:#dcdcdc;"></div>
<svg class="b" style="left:556px;top:948px" width="5" height="8" viewBox="0 0 5 8"><path d="M5 0L0.5 4L5 8Z" fill="#a3a3a3"/></svg>
<svg class="b" style="left:754px;top:948px" width="5" height="8" viewBox="0 0 5 8"><path d="M0 0L4.5 4L0 8Z" fill="#505050"/></svg>
<span class="t" style="left:809.0px;top:674.6px;font-size:13.5px;line-height:13.5px;color:#7a7a7a;letter-spacing:0.116px;">Golden Baseline Analysis:</span>
<span class="t" style="left:972.0px;top:674.6px;font-size:13.5px;line-height:13.5px;color:#d8334a;letter-spacing:0.247px;">Alert Detected</span>
<span class="t" style="left:1094.0px;top:674.6px;font-size:13.5px;line-height:13.5px;color:#7a7a7a;letter-spacing:0.136px;">Golden Baseline:</span>
<span class="t" style="left:1208.0px;top:676.6px;font-size:14px;line-height:14px;color:#2a76b0;letter-spacing:0.418px;">Equals: Full-duplex</span>
<span class="t" style="left:809.0px;top:714.1px;font-size:13.5px;line-height:13.5px;color:#333;letter-spacing:0.275px;">144 items</span>
<div class="b" style="left:1964px;top:708px;width:82px;height:29px;background:#e3ecf8;border:1px solid #a7c3e8;border-radius:3px"></div>
<span class="t" style="left:1976.0px;top:715.1px;font-size:13.5px;line-height:13.5px;color:#222;letter-spacing:0.354px;">Compare</span>
<div class="b" style="left:787px;top:745px;width:1292px;height:36px;background:#f5f5f5;border-top:1px solid #d6d6d6;border-bottom:1px solid #d6d6d6"></div>
<div class="b" style="left:1167px;top:746px;width:1px;height:34px;background:#dedede;"></div>
<div class="b" style="left:2058.5px;top:746px;width:2px;height:34px;background:#fdfdfd;"></div>
<span class="t" style="left:800.0px;top:756.1px;font-size:13.5px;line-height:13.5px;color:#333;letter-spacing:0.536px;">duplex</span>
<span class="t" style="left:1174.0px;top:756.1px;font-size:13.5px;line-height:13.5px;color:#333;letter-spacing:0.375px;">Time</span>
<div class="b" style="left:787px;top:782px;width:380px;height:33px;background:#e55b5e;"></div>
<div class="b" style="left:787px;top:815px;width:1273px;height:1px;background:#e4e4e4;"></div>
<span class="t" style="left:800.0px;top:791.8px;font-size:13.5px;line-height:13.5px;color:#fff;letter-spacing:0.338px;-webkit-text-stroke:0.25px #fff;">Half-duplex</span>
<span class="t" style="left:1174.0px;top:791.8px;font-size:13.5px;line-height:13.5px;color:#333;letter-spacing:0.188px;">06/25/2019 01:52:28 PM</span>
<span class="t" style="left:1333.0px;top:791.8px;font-size:13.5px;line-height:13.5px;color:#333;letter-spacing:0.232px;">(Map Data Time)</span>
<div class="b" style="left:787px;top:817px;width:380px;height:33px;background:#e55b5e;"></div>
<div class="b" style="left:1168px;top:817px;width:892px;height:33px;background:#fafafa;"></div>
<div class="b" style="left:787px;top:850px;width:1273px;height:1px;background:#e4e4e4;"></div>
<span class="t" style="left:800.0px;top:826.7px;font-size:13.5px;line-height:13.5px;color:#fff;letter-spacing:0.338px;-webkit-text-stroke:0.25px #fff;">Half-duplex</span>
<span class="t" style="left:1174.0px;top:826.7px;font-size:13.5px;line-height:13.5px;color:#333;letter-spacing:0.188px;">06/25/2019 01:52:12 PM</span>
<div class="b" style="left:787px;top:852px;width:380px;height:33px;background:#e55b5e;"></div>
<div class="b" style="left:787px;top:885px;width:1273px;height:1px;background:#e4e4e4;"></div>
<span class="t" style="left:800.0px;top:861.7px;font-size:13.5px;line-height:13.5px;color:#fff;letter-spacing:0.338px;-webkit-text-stroke:0.25px #fff;">Half-duplex</span>
<span class="t" style="left:1174.0px;top:861.7px;font-size:13.5px;line-height:13.5px;color:#333;letter-spacing:0.188px;">06/25/2019 01:52:05 PM</span>
<div class="b" style="left:787px;top:887px;width:380px;height:33px;background:#e55b5e;"></div>
<div class="b" style="left:1168px;top:887px;width:892px;height:33px;background:#fafafa;"></div>
<div class="b" style="left:787px;top:920px;width:1273px;height:1px;background:#e4e4e4;"></div>
<span class="t" style="left:800.0px;top:896.7px;font-size:13.5px;line-height:13.5px;color:#fff;letter-spacing:0.338px;-webkit-text-stroke:0.25px #fff;">Half-duplex</span>
<span class="t" style="left:1174.0px;top:896.7px;font-size:13.5px;line-height:13.5px;color:#333;letter-spacing:0.188px;">06/25/2019 01:51:58 PM</span>
<div class="b" style="left:787px;top:922px;width:380px;height:33px;background:#e55b5e;"></div>
<div class="b" style="left:787px;top:955px;width:1273px;height:1px;background:#e4e4e4;"></div>
<span class="t" style="left:800.0px;top:931.7px;font-size:13.5px;line-height:13.5px;color:#fff;letter-spacing:0.338px;-webkit-text-stroke:0.25px #fff;">Half-duplex</span>
<span class="t" style="left:1174.0px;top:931.7px;font-size:13.5px;line-height:13.5px;color:#333;letter-spacing:0.188px;">06/25/2019 01:51:55 PM</span>
<div class="b" style="left:787px;top:957px;width:380px;height:6px;background:#e55b5e;"></div>
<div class="b" style="left:2061px;top:782px;width:18px;height:180px;background:#f3f3f3;"></div>
<div class="b" style="left:2063px;top:800px;width:15.5px;height:12px;background:#c1c1c1;"></div>
<svg class="b" style="left:2066px;top:787px" width="8" height="5" viewBox="0 0 8 5"><path d="M0 5L4 0.5L8 5Z" fill="#a3a3a3"/></svg>
<svg class="b" style="left:2066px;top:949px" width="8" height="5" viewBox="0 0 8 5"><path d="M0 0L4 4.5L8 0Z" fill="#505050"/></svg>
<div class="b" style="left:551px;top:962px;width:1528px;height:1px;background:#e0e0e0;"></div>
<div class="b" style="left:2079px;top:591px;width:1px;height:371px;background:#d0d0d0;"></div>
<div class="b" style="left:2079px;top:0px;width:3px;height:1152px;background:#fff;"></div>
</body></html>
